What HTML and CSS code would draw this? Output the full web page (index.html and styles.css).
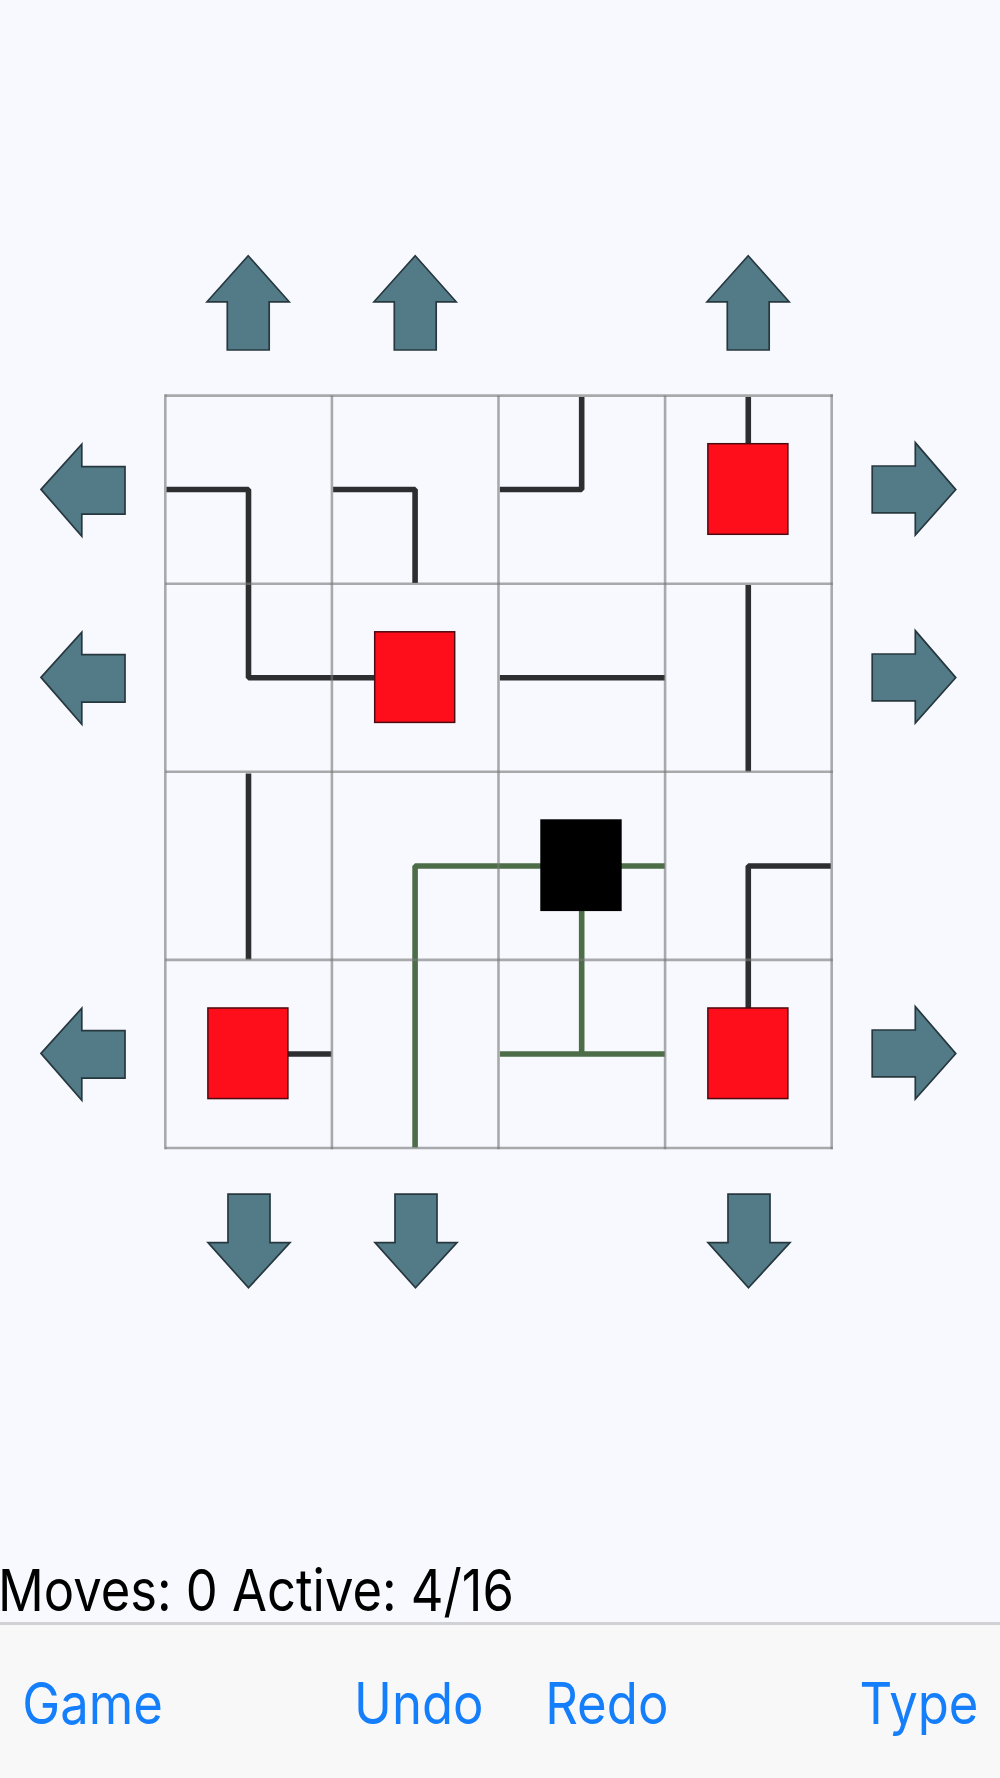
FILE: index.html
```
<!DOCTYPE html>
<html lang="en">
<head>
  <meta charset="UTF-8">
  <meta name="viewport" content="width=device-width, initial-scale=1.0">
  <title>Net</title>
  <link rel="stylesheet" href="styles.css">
</head>
<body>
  <!-- Arrow shapes, one per direction, drawn in a single tile -->
  <svg class="shapes" aria-hidden="true">
    <symbol id="arrow-up" viewBox="0 0 166.6 188.1">
      <path d="M83.2 47.8L124.2 93.8H104.2V142H62.3V93.8H42Z"/>
    </symbol>
    <symbol id="arrow-down" viewBox="0 0 166.6 188.1">
      <path d="M83.5 139.8L125 94.6H105V46.2H63V94.6H43Z"/>
    </symbol>
    <symbol id="arrow-left" viewBox="0 0 166.6 188.1">
      <path d="M42 93.4L82.8 48.2V70.6H126V118.1H82.8V140.2Z"/>
    </symbol>
    <symbol id="arrow-right" viewBox="0 0 166.6 188.1">
      <path d="M123.8 93.6L83.3 46.6V70H40.2V116.9H83.3V139Z"/>
    </symbol>
  </svg>

  <main class="game">
    <div class="puzzle">
      <!-- Column arrows, top -->
      <svg class="arrow top col-1"><use href="#arrow-up"/></svg>
      <svg class="arrow top col-2"><use href="#arrow-up"/></svg>
      <svg class="arrow top col-4"><use href="#arrow-up"/></svg>

      <!-- Row arrows, left and right -->
      <svg class="arrow left row-1"><use href="#arrow-left"/></svg>
      <svg class="arrow left row-2"><use href="#arrow-left"/></svg>
      <svg class="arrow left row-4"><use href="#arrow-left"/></svg>
      <svg class="arrow right row-1"><use href="#arrow-right"/></svg>
      <svg class="arrow right row-2"><use href="#arrow-right"/></svg>
      <svg class="arrow right row-4"><use href="#arrow-right"/></svg>

      <!-- 4x4 board -->
      <svg class="board" viewBox="165.1 396 666.4 752.4">
        <g class="wire">
          <path d="M166.5 489.5H248.6V677.7H375"/>
          <path d="M333.2 489.5H415.2V583"/>
          <path d="M500 489.5H581.8V397"/>
          <path d="M748.4 397V444"/>
          <path d="M500 677.7H665"/>
          <path d="M748.4 585V771.5"/>
          <path d="M248.6 773.5V959.5"/>
          <path d="M831 866H748.4V1008"/>
          <path d="M288 1054H331.5"/>
        </g>
        <g class="wire active">
          <path d="M415.2 1147.5V866H665"/>
          <path d="M581.8 866V1054M500 1054H665"/>
        </g>
        <g class="lines">
          <path d="M165.4 394.3V1149.3"/>
          <path d="M332 395.6V1149.3"/>
          <path d="M498.6 395.6V1149.3"/>
          <path d="M665.2 395.6V1149.3"/>
          <path d="M831.8 394.3V1149.3"/>
          <path d="M165.4 395.6H833"/>
          <path d="M165.4 583.7H833"/>
          <path d="M165.4 771.8H833"/>
          <path d="M165.4 959.9H833"/>
          <path d="M165.4 1148H833"/>
        </g>
        <g class="node">
          <rect x="708" y="443.7" width="80" height="90.6"/>
          <rect x="374.8" y="631.8" width="80" height="90.6"/>
          <rect x="208" y="1008" width="80" height="90.6"/>
          <rect x="708" y="1008" width="80" height="90.6"/>
        </g>
        <rect class="source" x="540.4" y="819.3" width="81.4" height="91.8"/>
      </svg>

      <!-- Column arrows, bottom -->
      <svg class="arrow bottom col-1"><use href="#arrow-down"/></svg>
      <svg class="arrow bottom col-2"><use href="#arrow-down"/></svg>
      <svg class="arrow bottom col-4"><use href="#arrow-down"/></svg>
    </div>

    <div class="status"><span class="status-text">Moves: 0 Active: 4/16</span></div>
  </main>

  <nav class="toolbar">
    <div class="toolbar-items">
      <a href="#">Game</a>
      <div class="history">
        <a href="#">Undo</a>
        <a href="#">Redo</a>
      </div>
      <a href="#">Type</a>
    </div>
  </nav>
</body>
</html>
```

FILE: styles.css
```
* {
  box-sizing: border-box;
}

body {
  margin: 0;
  height: 1778px;
  display: flex;
  flex-direction: column;
  overflow: hidden;
  background: #f8f9ff;
  font-family: Inter, "Liberation Sans", sans-serif;
  color: #000;
}

.shapes {
  display: none;
}

/* Game area fills everything above the toolbar */
.game {
  flex: 1;
  display: flex;
  flex-direction: column;
  justify-content: space-between;
  padding-top: 207.5px;
}

/* One ring of arrow cells around the 4x4 board */
.puzzle {
  display: grid;
  grid-template-columns: repeat(6, 166.6px);
  grid-template-rows: repeat(6, 188.1px);
  margin-left: -1.2px;
}

.board {
  grid-area: 2 / 2 / 6 / 6;
  width: 100%;
  height: 100%;
  overflow: visible;
}

.arrow {
  width: 100%;
  height: 100%;
  fill: #537a87;
  stroke: #26383e;
  stroke-width: 1.7;
}

.top { grid-row: 1; }
.bottom { grid-row: 6; }
.left { grid-column: 1; }
.right { grid-column: 6; }

.col-1 { grid-column: 2; }
.col-2 { grid-column: 3; }
.col-4 { grid-column: 5; }

.row-1 { grid-row: 2; }
.row-2 { grid-row: 3; }
.row-4 { grid-row: 5; }

.wire {
  fill: none;
  stroke: #2c2e30;
  stroke-width: 5.6;
  stroke-linejoin: bevel;
}

.wire.active {
  stroke: #4c6d47;
}

.lines {
  stroke: rgba(120, 120, 120, 0.62);
  stroke-width: 2.6;
}

.node {
  fill: #fe0d1b;
  stroke: #4d0a10;
  stroke-width: 1.5;
}

.source {
  fill: #000;
}

/* Status line */
.status {
  height: 67px;
  margin-left: -2.5px;
  font-size: 58px;
  line-height: 70px;
  white-space: nowrap;
}

.status-text {
  display: inline-block;
  transform: scaleX(0.874);
  transform-origin: left;
}

/* Bottom toolbar */
.toolbar {
  height: 156px;
  border-top: 3px solid #d0d0d5;
  background: #f8f8f8;
}

/* Labels are slightly condensed, so the row is laid out wider and squeezed */
.toolbar-items {
  width: 1121px;
  display: flex;
  justify-content: space-between;
  padding: 44px 24px 0 25px;
  transform: scaleX(0.892);
  transform-origin: left;
}

.toolbar a {
  font-size: 57px;
  line-height: 70px;
  color: #147efb;
  text-decoration: none;
}

.history {
  display: flex;
  gap: 69px;
}
```
